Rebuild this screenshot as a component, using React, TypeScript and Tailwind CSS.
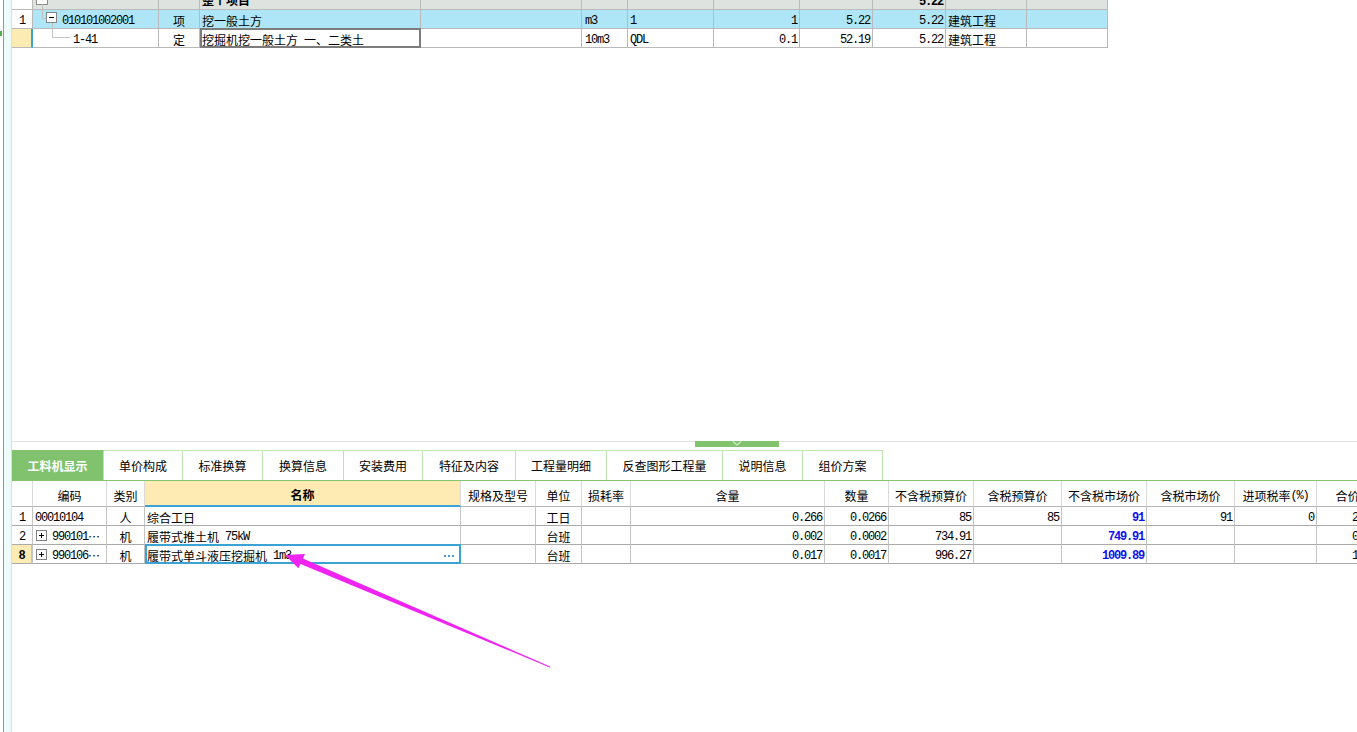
import { clsx } from "clsx";
import type { ReactNode } from "react";

type Align = "l" | "c" | "r";

// ASCII runs get the SimSun-like 6px advance, CJK stays full width
function Txt({ s }: { s: string }) {
  const parts = s.split(/([\x20-\x7e]+)/).filter(Boolean);
  return (
    <>
      {parts.map((p, i) =>
        /^[\x20-\x7e]+$/.test(p) ? (
          <span key={i} className="whitespace-pre tracking-[-1.2px]">
            {p}
          </span>
        ) : (
          <span key={i} className="font-['Noto_Sans_CJK_SC',sans-serif]">
            {p}
          </span>
        )
      )}
    </>
  );
}

function alignCls(a: Align) {
  return a === "r" ? "justify-end pr-[2px]" : a === "c" ? "justify-center" : "pl-[2px]";
}

const TOP_W = [
  "w-[21px]",
  "w-[126px]",
  "w-[41px]",
  "w-[221px]",
  "w-[161px]",
  "w-[46px]",
  "w-[86px]",
  "w-[86px]",
  "w-[73px]",
  "w-[73px]",
  "w-[81px]",
  "w-[81px]",
];

const BOT_W = [
  "w-[21px]",
  "w-[74px]",
  "w-[38px]",
  "w-[316px]",
  "w-[75px]",
  "w-[46px]",
  "w-[49px]",
  "w-[194px]",
  "w-[64px]",
  "w-[85px]",
  "w-[88px]",
  "w-[85px]",
  "w-[88px]",
  "w-[82px]",
  "w-[62px]",
];

interface CellProps {
  w: string;
  a?: Align;
  className?: string;
  children?: ReactNode;
}

function TopCell({ w, a = "l", className, children }: CellProps) {
  return (
    <div
      className={clsx(
        "relative flex h-full shrink-0 items-center overflow-hidden whitespace-nowrap border-r border-b border-[#b9b9b9] pt-[4px]",
        w,
        alignCls(a),
        className
      )}
    >
      {children}
    </div>
  );
}

function TopTable() {
  const blue = "bg-[#afe6f7]";
  const head = "bg-[#dee3df] !pt-0";
  return (
    <div className="w-[1096px]">
      {/* row cut by the top edge */}
      <div className="flex h-[10px] items-stretch">
        <TopCell w={TOP_W[0]} className="bg-white !pt-0" />
        <TopCell w={TOP_W[1]} className={clsx(head, "!pl-0")}>
          <svg width="20" height="9" className="shrink-0 overflow-visible">
            <rect x="3.5" y="-6" width="11" height="10.5" fill="#fff" stroke="#8c8c8c" />
            <line x1="9.5" y1="4.5" x2="9.5" y2="10" stroke="#c4c4c4" />
          </svg>
        </TopCell>
        <TopCell w={TOP_W[2]} className={head} />
        <TopCell w={TOP_W[3]} className={clsx(head, "items-end")}>
          <span className="mb-px font-bold leading-[12px]">整个项目</span>
        </TopCell>
        {[4, 5, 6, 7, 8].map((i) => (
          <TopCell key={i} w={TOP_W[i]} className={head} />
        ))}
        <TopCell w={TOP_W[9]} a="r" className={clsx(head, "items-end")}>
          <span className="mb-px font-bold leading-[12px]">
            <Txt s="5.22" />
          </span>
        </TopCell>
        <TopCell w={TOP_W[10]} className={head} />
        <TopCell w={TOP_W[11]} className={head} />
      </div>

      {/* 1: bill item */}
      <div className="flex h-[19px]">
        <TopCell w={TOP_W[0]} a="c" className="bg-white">
          <Txt s="1" />
        </TopCell>
        <TopCell w={TOP_W[1]} className={clsx(blue, "!pl-0")}>
          <svg width="29" height="18" className="-mt-[4px] shrink-0 self-start overflow-visible">
            <polyline points="9.5,-1 9.5,8.5 13,8.5" fill="none" stroke="#c4c4c4" />
            <line x1="19.5" y1="12.5" x2="19.5" y2="20" stroke="#c4c4c4" />
            <rect x="13.5" y="2.5" width="10" height="10" fill="#fff" stroke="#858585" />
            <line x1="16" y1="7.5" x2="21" y2="7.5" stroke="#000" />
          </svg>
          <Txt s="010101002001" />
        </TopCell>
        <TopCell w={TOP_W[2]} a="c" className={blue}>
          <Txt s="项" />
        </TopCell>
        <TopCell w={TOP_W[3]} className={blue}>
          <Txt s="挖一般土方" />
        </TopCell>
        <TopCell w={TOP_W[4]} className={blue} />
        <TopCell w={TOP_W[5]} className={clsx(blue, "!pl-[3px]")}>
          <Txt s="m3" />
        </TopCell>
        <TopCell w={TOP_W[6]} className={blue}>
          <Txt s="1" />
        </TopCell>
        <TopCell w={TOP_W[7]} a="r" className={blue}>
          <Txt s="1" />
        </TopCell>
        <TopCell w={TOP_W[8]} a="r" className={blue}>
          <Txt s="5.22" />
        </TopCell>
        <TopCell w={TOP_W[9]} a="r" className={blue}>
          <Txt s="5.22" />
        </TopCell>
        <TopCell w={TOP_W[10]} className={blue}>
          <Txt s="建筑工程" />
        </TopCell>
        <TopCell w={TOP_W[11]} className={blue} />
      </div>

      {/* 1-41: quota */}
      <div className="flex h-[19px]">
        <TopCell w={TOP_W[0]} className="border-r-2 border-r-[#3aa3d4] bg-[#fdebb4]" />
        <TopCell w={TOP_W[1]} className="!pl-0">
          <svg width="40" height="18" className="-mt-[4px] shrink-0 self-start overflow-visible">
            <polyline points="19.5,-1 19.5,8.5 37,8.5" fill="none" stroke="#c4c4c4" />
          </svg>
          <Txt s="1-41" />
        </TopCell>
        <TopCell w={TOP_W[2]} a="c">
          <Txt s="定" />
        </TopCell>
        <TopCell w={TOP_W[3]} className="overflow-visible">
          <Txt s="挖掘机挖一般土方 一、二类土" />
          <div className="pointer-events-none absolute -top-px -right-px -bottom-px left-0 border-2 border-[#7c7c7c]" />
        </TopCell>
        <TopCell w={TOP_W[4]} />
        <TopCell w={TOP_W[5]} className="!pl-[3px]">
          <Txt s="10m3" />
        </TopCell>
        <TopCell w={TOP_W[6]}>
          <Txt s="QDL" />
        </TopCell>
        <TopCell w={TOP_W[7]} a="r">
          <Txt s="0.1" />
        </TopCell>
        <TopCell w={TOP_W[8]} a="r">
          <Txt s="52.19" />
        </TopCell>
        <TopCell w={TOP_W[9]} a="r">
          <Txt s="5.22" />
        </TopCell>
        <TopCell w={TOP_W[10]}>
          <Txt s="建筑工程" />
        </TopCell>
        <TopCell w={TOP_W[11]} />
      </div>
    </div>
  );
}

const TABS = [
  { label: "工料机显示", w: "w-[92px]" },
  { label: "单价构成", w: "w-[79px]" },
  { label: "标准换算", w: "w-[80px]" },
  { label: "换算信息", w: "w-[81px]" },
  { label: "安装费用", w: "w-[79px]" },
  { label: "特征及内容", w: "w-[93px]" },
  { label: "工程量明细", w: "w-[91px]" },
  { label: "反查图形工程量", w: "w-[116px]" },
  { label: "说明信息", w: "w-[80px]" },
  { label: "组价方案", w: "w-[80px]" },
];

const HEADERS = [
  "",
  "编码",
  "类别",
  "名称",
  "规格及型号",
  "单位",
  "损耗率",
  "含量",
  "数量",
  "不含税预算价",
  "含税预算价",
  "不含税市场价",
  "含税市场价",
  "进项税率(%)",
  "合价",
];

const ALIGN: Align[] = ["c", "l", "c", "l", "l", "c", "r", "r", "r", "r", "r", "r", "r", "r", "r"];

const ROWS = [
  ["1", "00010104", "人", "综合工日", "", "工日", "", "0.266", "0.0266", "85", "85", "91", "91", "0", "2.42"],
  ["2", "990101…", "机", "履带式推土机 75kW", "", "台班", "", "0.002", "0.0002", "734.91", "", "749.91", "", "", "0.15"],
  ["8", "990106…", "机", "履带式单斗液压挖掘机 1m3", "", "台班", "", "0.017", "0.0017", "996.27", "", "1009.89", "", "", "1.72"],
];

function PlusBox() {
  return (
    <svg width="19" height="18" className="-mt-[4px] shrink-0 self-start">
      <rect x="3.5" y="4.5" width="10" height="10" fill="#fff" stroke="#808080" />
      <line x1="6" y1="9.5" x2="11" y2="9.5" stroke="#000" />
      <line x1="8.5" y1="7" x2="8.5" y2="12" stroke="#000" />
    </svg>
  );
}

function BottomTable() {
  return (
    <div className="flex flex-col">
      <div className="flex h-[26px]">
        {HEADERS.map((h, i) => (
          <div
            key={i}
            className={clsx(
              "flex h-full shrink-0 items-center justify-center whitespace-nowrap border-r border-[#dadada] pt-[4px]",
              BOT_W[i],
              i === 3
                ? "border-b-2 border-b-[#3aa3d4] bg-[#feebb3] font-bold"
                : "border-b border-b-[#b3b3b3]"
            )}
          >
            <Txt s={h} />
          </div>
        ))}
      </div>
      {ROWS.map((row, r) => {
        const current = r === 2;
        return (
          <div key={r} className="flex h-[19px]">
            {row.map((v, i) => (
              <div
                key={i}
                className={clsx(
                  "relative flex h-full shrink-0 items-center whitespace-nowrap border-r border-b border-r-[#c4c4c4] border-b-[#aaaaaa] pt-[4px]",
                  BOT_W[i],
                  alignCls(ALIGN[i]),
                  i === 1 && "!pl-0",
                  i === 11 && "font-bold text-[#1010f0]",
                  i === 0 && current && "border-r-2 border-r-[#3aa3d4] bg-[#fdebb4] font-bold"
                )}
              >
                {i === 1 && r > 0 && <PlusBox />}
                {i === 1 && r === 0 && <span className="w-[2px]" />}
                <Txt s={v} />
                {i === 3 && current && (
                  <>
                    <div className="mr-[6px] ml-auto flex gap-[2px]">
                      <span className="h-[2px] w-[2px] bg-[#4d9bd3]" />
                      <span className="h-[2px] w-[2px] bg-[#4d9bd3]" />
                      <span className="h-[2px] w-[2px] bg-[#4d9bd3]" />
                    </div>
                    <div className="pointer-events-none absolute -top-px -right-px -bottom-px left-0 border-2 border-[#3aa3d4]" />
                  </>
                )}
              </div>
            ))}
          </div>
        );
      })}
    </div>
  );
}

export default function App() {
  return (
    <div className="relative flex h-[732px] w-[1357px] overflow-hidden bg-white text-[12px] leading-none text-black font-['Liberation_Mono','Noto_Sans_CJK_SC',monospace]">
      {/* left rail */}
      <div className="flex h-full w-[12px] shrink-0">
        <div className="w-[3px]">
          <div className="mt-[31px] h-[5px] w-[2px] bg-[#4cb24c]" />
        </div>
        <div className="w-px bg-[#959595]" />
        <div className="w-[7px] bg-[#eefbfb]" />
        <div className="w-px bg-[#dcdcdc]" />
      </div>

      <div className="flex min-w-0 flex-1 flex-col">
        <div className="h-[441px] shrink-0">
          <TopTable />
        </div>

        {/* splitter */}
        <div className="flex h-[9px] shrink-0 border-t border-[#e2e2e2]">
          <div className="-mt-px ml-[683px] flex h-[6px] w-[84px] items-start justify-center bg-[#82c46e]">
            <svg width="10" height="5">
              <polyline points="1,0.5 5,4 9,0.5" fill="none" stroke="#d3ecc9" strokeWidth="1.2" />
            </svg>
          </div>
        </div>

        {/* tabs */}
        <div className="flex h-[31px] shrink-0 border-b border-[#84c571]">
          {TABS.map((t, i) => (
            <div
              key={t.label}
              className={clsx(
                "flex h-full shrink-0 items-center justify-center border-t border-r border-[#bfe4b2] font-['Noto_Sans_CJK_SC',sans-serif]",
                t.w,
                i === 0 ? "border-t-[#80c26d] bg-[#80c26d] font-bold text-white" : "text-black"
              )}
            >
              {t.label}
            </div>
          ))}
        </div>

        <div className="overflow-hidden">
          <BottomTable />
        </div>
      </div>

      {/* annotation arrow */}
      <svg className="pointer-events-none absolute inset-0" width="1357" height="732">
        <polygon
          points="285,555 305,554 302.9,558.4 550.2,666.6 549.8,667.4 300.5,564 298.3,568.3"
          fill="#f024f0"
        />
      </svg>
    </div>
  );
}
